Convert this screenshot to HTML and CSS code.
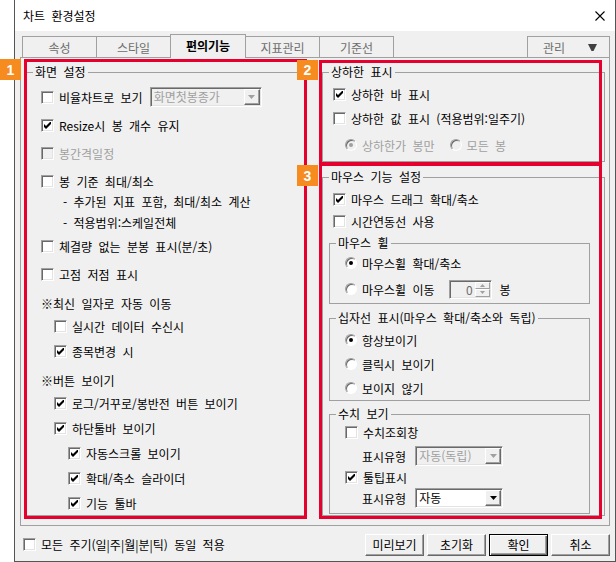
FILE: index.html
```html
<!DOCTYPE html>
<html lang="ko">
<head>
  <meta charset="UTF-8">
  <title>차트 환경설정</title>
  <link rel="stylesheet" href="styles.css">
</head>
<body>
<div class="screen">
  <div class="dialog">
    <div class="titlebar">
      <span>차트 환경설정</span>
      <svg class="close" width="10" height="10" viewBox="0 0 10 10"><path d="M0.5 0.5L9.5 9.5M9.5 0.5L0.5 9.5" stroke="#000" stroke-width="1.1"/></svg>
    </div>
    <div class="client">
      <div class="tabbar">
        <div class="tab">속성</div>
        <div class="tab">스타일</div>
        <div class="tab on">편의기능</div>
        <div class="tab">지표관리</div>
        <div class="tab">기준선</div>
        <div class="manage"><span>관리</span><svg width="9" height="7" viewBox="0 0 9 7"><path d="M0 0h9L5.5 7h-2z" fill="#404040"/></svg></div>
      </div>

      <div class="panel">
        <fieldset class="grp left">
          <legend>화면 설정</legend>
          <div class="inner">
            <div class="row"><span class="cb"></span><span>비율차트로 보기</span>
              <span class="combo off w112"><span class="val">화면첫봉종가</span><span class="drop"><svg class="tri" viewBox="0 0 7 4"><path d="M0 0h7L3.5 4z"/></svg></span></span>
            </div>
            <div class="row"><span class="cb"><svg class="tick" viewBox="0 0 7 7"><path d="M0 2L2 4L6 0H7V2L2 7L0 5Z"/></svg></span><span>Resize시 봉 개수 유지</span></div>
            <div class="row dis"><span class="cb dis"></span><span>봉간격일정</span></div>
            <div class="row"><span class="cb"></span><span>봉 기준 최대/최소</span></div>
            <div class="row sub">- 추가된 지표 포함, 최대/최소 계산</div>
            <div class="row sub">- 적용범위:스케일전체</div>
            <div class="row"><span class="cb"></span><span>체결량 없는 분봉 표시(분/초)</span></div>
            <div class="row"><span class="cb"></span><span>고점 저점 표시</span></div>
            <div class="row note">※최신 일자로 자동 이동</div>
            <div class="row in1"><span class="cb"></span><span>실시간 데이터 수신시</span></div>
            <div class="row in1"><span class="cb"><svg class="tick" viewBox="0 0 7 7"><path d="M0 2L2 4L6 0H7V2L2 7L0 5Z"/></svg></span><span>종목변경 시</span></div>
            <div class="row note">※버튼 보이기</div>
            <div class="row in1"><span class="cb"><svg class="tick" viewBox="0 0 7 7"><path d="M0 2L2 4L6 0H7V2L2 7L0 5Z"/></svg></span><span>로그/거꾸로/봉반전 버튼 보이기</span></div>
            <div class="row in1"><span class="cb"><svg class="tick" viewBox="0 0 7 7"><path d="M0 2L2 4L6 0H7V2L2 7L0 5Z"/></svg></span><span>하단툴바 보이기</span></div>
            <div class="row in2"><span class="cb"><svg class="tick" viewBox="0 0 7 7"><path d="M0 2L2 4L6 0H7V2L2 7L0 5Z"/></svg></span><span>자동스크롤 보이기</span></div>
            <div class="row in2"><span class="cb"><svg class="tick" viewBox="0 0 7 7"><path d="M0 2L2 4L6 0H7V2L2 7L0 5Z"/></svg></span><span>확대/축소 슬라이더</span></div>
            <div class="row in2"><span class="cb"><svg class="tick" viewBox="0 0 7 7"><path d="M0 2L2 4L6 0H7V2L2 7L0 5Z"/></svg></span><span>기능 툴바</span></div>
          </div>
        </fieldset>

        <div class="col">
          <fieldset class="grp limit">
            <legend>상하한 표시</legend>
            <div class="inner">
              <div class="row mt5"><span class="cb"><svg class="tick" viewBox="0 0 7 7"><path d="M0 2L2 4L6 0H7V2L2 7L0 5Z"/></svg></span><span>상하한 바 표시</span></div>
              <div class="row mt4"><span class="cb"></span><span>상하한 값 표시 (적용범위:일주기)</span></div>
              <div class="row mt7 ind12 dis"><span class="rd dis on"></span><span>상하한가 봉만</span><span class="rd dis gap10"></span><span>모든 봉</span></div>
            </div>
          </fieldset>

          <fieldset class="grp mouse">
            <legend>마우스 기능 설정</legend>
            <div class="inner">
              <div class="row mt5"><span class="cb"><svg class="tick" viewBox="0 0 7 7"><path d="M0 2L2 4L6 0H7V2L2 7L0 5Z"/></svg></span><span>마우스 드래그 확대/축소</span></div>
              <div class="row mt2"><span class="cb"></span><span>시간연동선 사용</span></div>

              <fieldset class="grp wheel">
                <legend>마우스 휠</legend>
                <div class="inner">
                  <div class="row mt3"><span class="rd on"></span><span>마우스휠 확대/축소</span></div>
                  <div class="row mt6"><span class="rd"></span><span>마우스휠 이동</span>
                    <span class="spin"><span class="val">0</span><span class="arrows"><span><svg class="mini" viewBox="0 0 5 3"><path d="M2.5 0L5 3H0z"/></svg></span><span><svg class="mini" viewBox="0 0 5 3"><path d="M0 0h5L2.5 3z"/></svg></span></span></span>
                    <span class="unit">봉</span>
                  </div>
                </div>
              </fieldset>

              <fieldset class="grp cross">
                <legend>십자선 표시(마우스 확대/축소와 독립)</legend>
                <div class="inner">
                  <div class="row mt5"><span class="rd on"></span><span>항상보이기</span></div>
                  <div class="row mt4"><span class="rd"></span><span>클릭시 보이기</span></div>
                  <div class="row mt4"><span class="rd"></span><span>보이지 않기</span></div>
                </div>
              </fieldset>

              <fieldset class="grp value">
                <legend>수치 보기</legend>
                <div class="inner">
                  <div class="row mt1"><span class="cb"></span><span>수치조회창</span></div>
                  <div class="row mt4 ind17"><span>표시유형</span>
                    <span class="combo off w88"><span class="val">자동(독립)</span><span class="drop"><svg class="tri" viewBox="0 0 7 4"><path d="M0 0h7L3.5 4z"/></svg></span></span>
                  </div>
                  <div class="row mt1"><span class="cb"><svg class="tick" viewBox="0 0 7 7"><path d="M0 2L2 4L6 0H7V2L2 7L0 5Z"/></svg></span><span>툴팁표시</span></div>
                  <div class="row mt1 ind17"><span>표시유형</span>
                    <span class="combo w88"><span class="val">자동</span><span class="drop"><svg class="tri" viewBox="0 0 7 4"><path d="M0 0h7L3.5 4z"/></svg></span></span>
                  </div>
                </div>
              </fieldset>
            </div>
          </fieldset>
        </div>
      </div>

      <div class="footer">
        <span class="cb"></span><span>모든 주기(일|주|월|분|틱) 동일 적용</span>
        <div class="btns">
          <div class="btn">미리보기</div>
          <div class="btn">초기화</div>
          <div class="btn default">확인</div>
          <div class="btn">취소</div>
        </div>
      </div>
    </div>
  </div>

  <div class="mark m1"></div>
  <div class="mark m2"></div>
  <div class="mark m3"></div>
  <div class="badge b1">1</div>
  <div class="badge b2">2</div>
  <div class="badge b3">3</div>
</div>
</body>
</html>
```

FILE: styles.css
```css
*{box-sizing:border-box;margin:0;padding:0}
body{background:#fff;font-family:"Noto Sans CJK KR","Noto Sans",sans-serif;font-size:12px;color:#000;word-spacing:3px}
.screen{position:relative;width:616px;height:562px;overflow:hidden}
.dialog{margin-left:14px;width:602px;height:562px;border:1px solid #555;border-top:0;display:flex;flex-direction:column}
.titlebar{height:31px;flex:none;background:#fff;display:flex;align-items:center;justify-content:space-between;padding:0 10px 0 8px}
.client{flex:1;background:#f0f0f0;display:flex;flex-direction:column}

/* tabs */
.tabbar{height:26px;flex:none;display:flex;align-items:flex-end;padding:0 5px 0 7px}
.tab{width:75px;height:21px;margin-right:-1px;border:1px solid #a0a0a0;border-bottom:0;color:#6d6d6d;display:flex;align-items:center;justify-content:center}
.tab.on{width:76px;height:24px;margin-bottom:-1px;padding-bottom:2px;position:relative;z-index:1;background:#f0f0f0;color:#000;font-weight:bold}
.manage{margin-left:auto;width:83px;height:21px;border:1px solid #a0a0a0;border-bottom:0;color:#6d6d6d;display:flex;align-items:center;justify-content:space-between;padding:0 12px 0 15px}

/* panel + group boxes */
.panel{height:469px;flex:none;margin:0 5px;border:1px solid #a0a0a0;display:flex;gap:17px;padding:7px 4px 0 5px}
.grp{border:1px solid #a0a0a0;min-width:0}
.grp legend{margin-left:6px;padding:0 2px;line-height:14px}
.left{width:279px;height:451px}
.left .inner{padding-left:14px}
.col{width:283px;display:flex;flex-direction:column}
.limit{height:97px}
.limit .inner{padding-left:10px}
.mouse{height:346px;margin-top:8px}
.mouse > .inner{padding:0 14px 0 10px}
.mouse .grp{margin-left:-4px}
.grp .grp .inner{padding:0 0 0 15px}
.wheel{margin-top:5px;padding-bottom:4px}
.cross{margin-top:7px;padding-bottom:2px}
.value{margin-top:6px;padding-bottom:5px}

/* rows */
.row{display:flex;align-items:center;gap:5px;height:20px;margin-top:8px;white-space:nowrap}
.sub{margin-top:0;padding-left:22px}
.in1{margin-top:5px;padding-left:13px}
.in2{margin-top:5px;padding-left:27px}
.sub + .row{margin-top:4px}
.sub + .sub{margin-top:1px}
.note{margin-top:9px;gap:0}
.note + .row{margin-top:3px}
.mt1{margin-top:1px}
.mt2{margin-top:2px}
.mt3{margin-top:3px}
.mt4{margin-top:4px}
.mt5{margin-top:5px}
.mt6{margin-top:6px}
.mt7{margin-top:7px}
.ind12{padding-left:12px}
.ind17{padding-left:17px}
.dis{color:#a0a0a0}

/* check boxes, radios */
.cb{flex:none;width:13px;height:13px;background:#fff;border:1px solid;border-color:#a0a0a0 #fff #fff #a0a0a0;box-shadow:inset 1px 1px #696969,inset -1px -1px #e3e3e3;display:flex;align-items:center;justify-content:center}
.cb.dis{background:#f0f0f0}
.tick{width:7px;height:7px;fill:#000}
.rd{flex:none;width:12px;height:12px;border-radius:50%;background:#fff;border:1px solid;border-color:#a0a0a0 #fff #fff #a0a0a0;box-shadow:inset 1px 1px #696969;position:relative}
.rd.on::after{content:"";position:absolute;left:3px;top:3px;width:4px;height:4px;border-radius:50%;background:#000}
.rd.dis{background:#f0f0f0}
.rd.dis::after{background:#a0a0a0}
.gap10{margin-left:10px}

/* combo, spin */
.combo{flex:none;display:flex;height:20px;background:#fff;color:#000;border:1px solid;border-color:#a0a0a0 #fff #fff #a0a0a0;box-shadow:inset 1px 1px #696969,inset -1px -1px #e3e3e3;padding:1px}
.combo .val{flex:1;padding-left:2px;line-height:16px}
.combo .drop{width:16px;background:#f0f0f0;border:1px solid;border-color:#fff #696969 #696969 #fff;box-shadow:inset -1px -1px #a0a0a0;display:flex;align-items:center;justify-content:center}
.combo.off{background:#f0f0f0;color:#a0a0a0}
.tri{width:7px;height:4px;fill:#000}
.off .tri{fill:#a0a0a0}
.w112{width:112px;margin-left:2px}
.w88{width:88px;margin-left:4px}
.spin{flex:none;display:flex;width:43px;height:19px;margin-left:9px;background:#f0f0f0;border:1px solid;border-color:#a0a0a0 #fff #fff #a0a0a0;box-shadow:inset 1px 1px #696969,inset -1px -1px #e3e3e3;padding:1px}
.spin .val{flex:1;text-align:right;padding-right:2px;line-height:15px;color:#6d6d6d}
.spin .arrows{width:15px;display:flex;flex-direction:column}
.spin .arrows span{flex:1;background:#f0f0f0;border:1px solid;border-color:#fff #a0a0a0 #a0a0a0 #fff;display:flex;align-items:center;justify-content:center}
.mini{width:5px;height:3px;fill:#a0a0a0}
.unit{margin-left:3px}

/* footer */
.footer{flex:1;display:flex;align-items:center;gap:5px;padding:2px 5px 0 8px}
.btns{margin-left:auto;display:flex;gap:3px}
.btn{width:59px;height:22px;background:#f0f0f0;border:1px solid;border-color:#fff #696969 #696969 #fff;box-shadow:inset -1px -1px #a0a0a0;display:flex;align-items:center;justify-content:center}
.btn.default{border:1px solid #000;box-shadow:inset 1px 1px #fff,inset -1px -1px #696969,inset -2px -2px #a0a0a0}

/* annotations */
.mark{position:absolute;border:3px solid #e5002d}
.m1{left:24px;top:59px;width:283px;height:460px}
.m2{left:319px;top:60px;width:283px;height:105px}
.m3{left:319px;top:163px;width:283px;height:356px}
.badge{position:absolute;width:21px;height:21px;background:#f68b1f;color:#fff;font:bold 14px "Liberation Sans",sans-serif;display:flex;align-items:center;justify-content:center}
.b1{left:0;top:59px}
.b2{left:297px;top:60px;height:20px}
.b3{left:297px;top:165px}
```
